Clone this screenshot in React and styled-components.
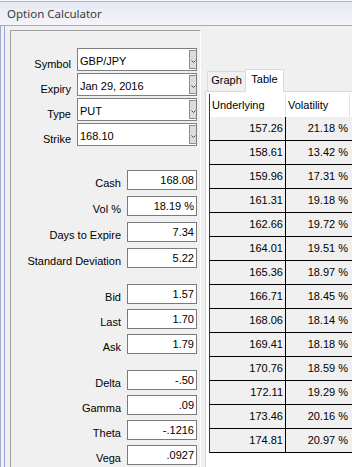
import React from "react";
import styled, { createGlobalStyle, css } from "styled-components";

const GlobalStyle = createGlobalStyle`
    html, body {
        margin: 0;
        padding: 0;
        background: #f0f0f0;
        overflow: hidden;
    }
    body {
        font-family: "Liberation Sans", Arial, sans-serif;
        font-size: 11px;
        color: #000;
    }
`;

const Window = styled.div`
    width: 352px;
    height: 467px;
    overflow: hidden;
    display: flex;
    flex-direction: column;
    background: #f0f0f0;
`;

const TitleBar = styled.div`
    flex: none;
    height: 23px;
    border-top: 1px solid #f7f8fb;
    box-shadow: inset 0 1px 0 #b4b7ca;
    border-bottom: 1px solid #a7aac2;
    background: linear-gradient(#e6e9f1, #f3f5fa);
    display: flex;
    align-items: center;
    padding: 1px 0 0 7px;
    font-family: "Noto Sans", "Liberation Sans", sans-serif;
    font-size: 11.5px;
    color: #3a3a3a;
`;

const Body = styled.div`
    flex: 1;
    min-height: 0;
    display: flex;
    border-left: 1px solid #a6aac6;
`;

const Frame = styled.div`
    flex: 1;
    display: flex;
    align-items: flex-start;
    gap: 4px;
    margin-left: 3px;
    padding: 4px 0 0 5px;
    border-left: 1px solid #9ea4d9;
`;

const LeftPanel = styled.div`
    flex: none;
    width: 189px;
    height: 460px;
    padding-top: 17px;
    box-sizing: content-box;
    border-top: 1px solid #a0a0a0;
    border-left: 1px solid #a0a0a0;
    border-right: 1px solid #ffffff;
    display: flex;
    flex-direction: column;
`;

const ComboRow = styled.div`
    display: flex;
    align-items: flex-end;
    gap: 6px;
    height: 23px;
    margin-bottom: 2px;
`;

const FieldGroup = styled.div`
    display: flex;
    flex-direction: column;
    gap: ${props => props.gap}px;
    margin-top: ${props => props.top}px;
`;

const FieldRow = styled.div`
    display: flex;
    align-items: flex-end;
    gap: 6px;
    height: 20px;
`;

const Label = styled.div`
    flex: none;
    width: ${props => props.width}px;
    text-align: right;
    line-height: 14px;
    white-space: nowrap;
`;

const Combo = styled.div`
    flex: none;
    width: 120px;
    height: 23px;
    box-sizing: border-box;
    border: 1px solid #7f7f7f;
    background: #fff;
    display: flex;
`;

const ComboText = styled.div`
    flex: 1;
    padding: 3px 0 0 2px;
    line-height: 18px;
    white-space: nowrap;
`;

const ComboButton = styled.div`
    flex: none;
    width: 7px;
    margin: 1px 0;
    box-sizing: border-box;
    border: 1px solid #8c8c8c;
    border-right: none;
    border-radius: 1px;
    background: #dcdcdc;
    display: flex;
    align-items: center;
    justify-content: center;
    padding-top: 4px;
`;

const Input = styled.div`
    flex: none;
    width: 70px;
    height: 20px;
    box-sizing: border-box;
    border: 1px solid #7a7a7a;
    background: #fff;
    text-align: right;
    padding-right: 2px;
    line-height: 18px;
`;

const TabArea = styled.div`
    flex: none;
    width: 170px;
    padding-top: 39px;
    display: flex;
    flex-direction: column;
`;

const TabStrip = styled.div`
    display: flex;
    align-items: flex-end;
    height: 22px;
    padding-left: 2px;
    position: relative;
    z-index: 1;
`;

const Tab = styled.div`
    width: 39px;
    box-sizing: border-box;
    border: 1px solid #d9d9d9;
    border-bottom: none;
    text-align: center;
    line-height: 14px;
    ${props =>
        props.active
            ? css`
                  height: 23px;
                  margin-bottom: -1px;
                  padding-top: 2px;
                  background: #fff;
              `
            : css`
                  height: 20px;
                  padding-top: 1px;
                  margin-right: -1px;
                  background: #f0f0f0;
              `};
`;

const TabPage = styled.div`
    height: 400px;
    border: 1px solid #d9d9d9;
    background: #fff;
    padding: 2px 0 0 3px;
`;

const Grid = styled.div`
    border-left: 1px solid #3a3a3a;
`;

const HeaderRow = styled.div`
    display: grid;
    grid-template-columns: 76px 64px 1fr;
    height: 23px;
    background: #fff;
`;

const HeaderCell = styled.div`
    padding-left: 2px;
    line-height: 23px;
    border-right: 1px solid #e3e3e3;
    white-space: nowrap;
`;

const DataRow = styled.div`
    display: grid;
    grid-template-columns: 76px 64px 1fr;
    height: 24px;
    box-sizing: border-box;
    border-bottom: 1px solid #000;
    background: #f0f0f0;
`;

const DataCell = styled.div`
    text-align: right;
    padding-right: 2px;
    line-height: 23px;
    border-right: ${props => (props.first ? "1px solid #000" : "none")};
`;

const Chevron = () => (
    <svg width="5" height="3" viewBox="0 0 5 3">
        <polyline
            points="0.5,0.5 2.5,2.5 4.5,0.5"
            fill="none"
            stroke="#505050"
            strokeWidth="1"
        />
    </svg>
);

const combos = [
    ["Symbol", "GBP/JPY"],
    ["Expiry", "Jan 29, 2016"],
    ["Type", "PUT"],
    ["Strike", "168.10"]
];

const groups = [
    {
        top: 22,
        gap: 6,
        fields: [
            ["Cash", "168.08"],
            ["Vol %", "18.19 %"],
            ["Days to Expire", "7.34"],
            ["Standard Deviation", "5.22"]
        ]
    },
    {
        top: 16,
        gap: 5,
        fields: [
            ["Bid", "1.57"],
            ["Last", "1.70"],
            ["Ask", "1.79"]
        ]
    },
    {
        top: 16,
        gap: 5,
        fields: [
            ["Delta", "-.50"],
            ["Gamma", ".09"],
            ["Theta", "-.1216"],
            ["Vega", ".0927"]
        ]
    }
];

const rows = [
    ["157.26", "21.18 %"],
    ["158.61", "13.42 %"],
    ["159.96", "17.31 %"],
    ["161.31", "19.18 %"],
    ["162.66", "19.72 %"],
    ["164.01", "19.51 %"],
    ["165.36", "18.97 %"],
    ["166.71", "18.45 %"],
    ["168.06", "18.14 %"],
    ["169.41", "18.18 %"],
    ["170.76", "18.59 %"],
    ["172.11", "19.29 %"],
    ["173.46", "20.16 %"],
    ["174.81", "20.97 %"]
];

export default function App() {
    return (
        <Window>
            <GlobalStyle />
            <TitleBar>Option Calculator</TitleBar>
            <Body>
                <Frame>
                    <LeftPanel>
                        {combos.map(([label, value]) => (
                            <ComboRow key={label}>
                                <Label width={60}>{label}</Label>
                                <Combo>
                                    <ComboText>{value}</ComboText>
                                    <ComboButton>
                                        <Chevron />
                                    </ComboButton>
                                </Combo>
                            </ComboRow>
                        ))}
                        {groups.map((group, i) => (
                            <FieldGroup key={i} top={group.top} gap={group.gap}>
                                {group.fields.map(([label, value]) => (
                                    <FieldRow key={label}>
                                        <Label width={110}>{label}</Label>
                                        <Input>{value}</Input>
                                    </FieldRow>
                                ))}
                            </FieldGroup>
                        ))}
                    </LeftPanel>
                    <TabArea>
                        <TabStrip>
                            <Tab>Graph</Tab>
                            <Tab active>Table</Tab>
                        </TabStrip>
                        <TabPage>
                            <Grid>
                                <HeaderRow>
                                    <HeaderCell>Underlying</HeaderCell>
                                    <HeaderCell>Volatility</HeaderCell>
                                    <div />
                                </HeaderRow>
                                {rows.map(([u, v]) => (
                                    <DataRow key={u}>
                                        <DataCell first>{u}</DataCell>
                                        <DataCell>{v}</DataCell>
                                        <div />
                                    </DataRow>
                                ))}
                            </Grid>
                        </TabPage>
                    </TabArea>
                </Frame>
            </Body>
        </Window>
    );
}
